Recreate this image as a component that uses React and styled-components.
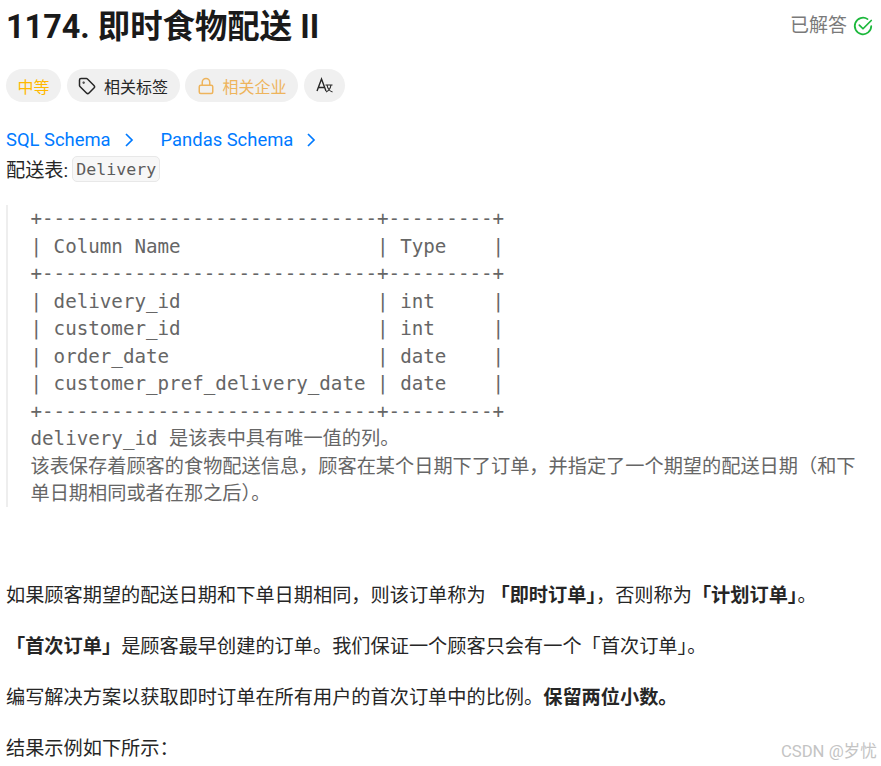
import styled, { createGlobalStyle } from "styled-components";
import { Tag, Lock } from "lucide-react";

const GlobalStyle = createGlobalStyle`
	html, body {
		margin: 0;
		padding: 0;
		background: #fff;
	}
	body {
		font-family: "Roboto", "Noto Sans CJK SC", sans-serif;
		color: #262626;
	}
`;

const Page = styled.div`
	position: relative;
	width: 881px;
	height: 766px;
	overflow: hidden;
	padding: 0 6px;
	box-sizing: border-box;
`;

const Header = styled.div`
	display: flex;
	justify-content: space-between;
	align-items: flex-start;
	height: 69px;
`;

const Title = styled.h1`
	margin: 0;
	font-size: 32.4px;
	line-height: 54px;
	font-weight: 700;
	color: #1a1a1a;
`;

const Solved = styled.div`
	display: flex;
	align-items: center;
	gap: 5px;
	margin: 14px 1px 0 0;
	font-size: 19px;
	line-height: 24px;
	color: #7a7a7a;
`;

const SolvedIcon = styled.svg`
	width: 22px;
	height: 22px;
	fill: none;
	stroke: #1cb83c;
	stroke-width: 1.9;
	stroke-linecap: round;
	stroke-linejoin: round;
`;

const Tags = styled.div`
	display: flex;
	gap: 5.5px;
	height: 33px;
`;

const Pill = styled.div`
	display: flex;
	align-items: center;
	gap: 8px;
	padding: 0 ${(props) => props.$pad || 11.5}px;
	border-radius: 17px;
	background: #f0f0f0;
	font-size: 16px;
	color: ${(props) => props.$color || "#262626"};
`;

const Links = styled.div`
	display: flex;
	gap: 27px;
	margin-top: 23px;
	height: 29px;
	align-items: center;
	font-size: 18.4px;
	color: #007aff;
`;

const SchemaLink = styled.span`
	display: flex;
	align-items: center;
	gap: 13px;
`;

const Intro = styled.div`
	display: flex;
	align-items: center;
	gap: 4px;
	height: 29px;
	font-size: 19.2px;
	color: #262626;
`;

const Code = styled.code`
	font-family: "DejaVu Sans Mono", "Noto Sans CJK SC", monospace;
	font-size: 16.6px;
	line-height: 23px;
	margin-top: 1px;
	padding: 1px 3px 0;
	color: #5c5c5c;
	background: #f7f7f7;
	border: 1px solid #e8e8e8;
	border-radius: 5px;
`;

const Pre = styled.pre`
	margin: 22px 0 0;
	padding: 0 14px 0 22.5px;
	height: 302px;
	border-left: 2px solid #eeeeee;
	font-family: "DejaVu Sans Mono", "Noto Sans CJK SC", monospace;
	font-size: 19.2px;
	line-height: 27.5px;
	color: #666666;
	white-space: pre-wrap;
`;

const Para = styled.p`
	margin: 0 0 23px;
	font-size: 19.2px;
	line-height: 28px;
	color: #262626;
`;

const Body = styled.div`
	margin-top: 75px;
`;

const Watermark = styled.div`
	position: absolute;
	right: 4px;
	bottom: 4px;
	font-size: 16.7px;
	color: #c4c4c4;
`;

const table = `+-----------------------------+---------+
| Column Name                 | Type    |
+-----------------------------+---------+
| delivery_id                 | int     |
| customer_id                 | int     |
| order_date                  | date    |
| customer_pref_delivery_date | date    |
+-----------------------------+---------+
delivery_id 是该表中具有唯一值的列。
该表保存着顾客的食物配送信息，顾客在某个日期下了订单，并指定了一个期望的配送日期（和下单日期相同或者在那之后）。`;

const Chevron = () => (
	<svg width="10" height="16" viewBox="0 0 10 16" fill="none" stroke="#007aff" strokeWidth="1.7">
		<path d="M2 2l6 6-6 6" />
	</svg>
);

const App = () => {
	return (
		<Page>
			<GlobalStyle />
			<Header>
				<Title>1174. 即时食物配送 II</Title>
				<Solved>
					已解答
					<SolvedIcon viewBox="0 0 24 24">
						<path d="M21 12a9 9 0 1 1-4-7.5" />
						<path d="M8 11l4 4 9-9" />
					</SolvedIcon>
				</Solved>
			</Header>
			<Tags>
				<Pill $color="#ffb800">中等</Pill>
				<Pill>
					<Tag size={18} />
					相关标签
				</Pill>
				<Pill $color="#eeb45c">
					<Lock size={18} />
					相关企业
				</Pill>
				<Pill $pad={12}>
					<svg width="17" height="17" viewBox="0 0 17 17" fill="none" stroke="#262626" strokeWidth="1.4">
						<path d="M1 14L5.5 2 10 14M2.5 10.5h6" />
						<path d="M9.5 8h7M11 8c.5 3 2.5 6 5.5 7M15 8c-.5 3-2.5 6-5 7" strokeWidth="1.1" />
					</svg>
				</Pill>
			</Tags>
			<Links>
				<SchemaLink>
					SQL Schema
					<Chevron />
				</SchemaLink>
				<SchemaLink>
					Pandas Schema
					<Chevron />
				</SchemaLink>
			</Links>
			<Intro>
				配送表: <Code>Delivery</Code>
			</Intro>
			<Pre>{table}</Pre>
			<Body>
				<Para>
					如果顾客期望的配送日期和下单日期相同，则该订单称为 <b>「即时订单」</b>，否则称为<b>「计划订单」</b>。
				</Para>
				<Para>
					<b>「首次订单」</b>是顾客最早创建的订单。我们保证一个顾客只会有一个「首次订单」。
				</Para>
				<Para>
					编写解决方案以获取即时订单在所有用户的首次订单中的比例。<b>保留两位小数。</b>
				</Para>
				<Para>结果示例如下所示：</Para>
			</Body>
			<Watermark>CSDN @岁忧</Watermark>
		</Page>
	);
};

export default App;
